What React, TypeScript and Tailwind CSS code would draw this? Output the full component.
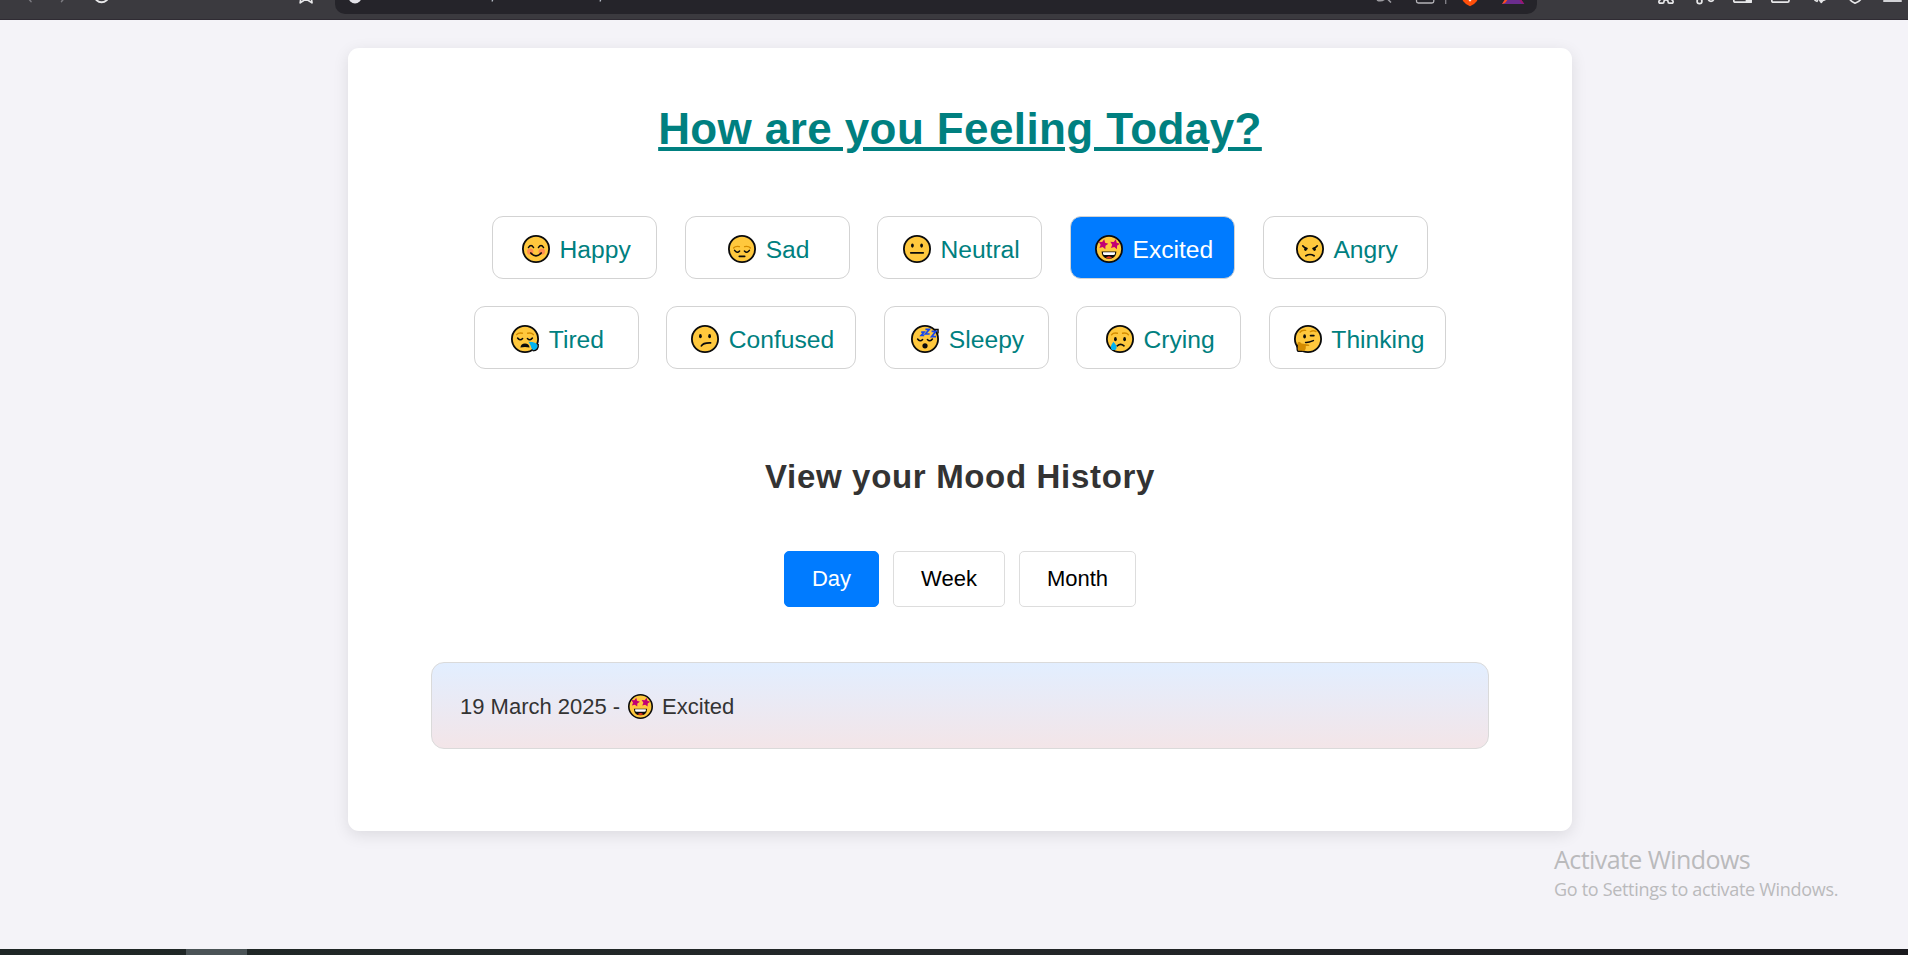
import { useState, type ReactNode } from "react";

const INK = "#0b0b0b";
const TAN = "#d48c00";

const starPoints = (cx: number, cy: number, r: number) =>
  Array.from({ length: 10 }, (_, i) => {
    const radius = i % 2 === 0 ? r : r * 0.5;
    const a = -Math.PI / 2 + 0.2 + (i * Math.PI) / 5;
    return `${(cx + radius * Math.cos(a)).toFixed(2)},${(cy + radius * Math.sin(a)).toFixed(2)}`;
  }).join(" ");

const Stroke = ({ d, color = INK, w = 1.6 }: { d: string; color?: string; w?: number }) => (
  <path d={d} fill="none" stroke={color} strokeWidth={w} strokeLinecap="round" />
);

const Eyes = ({ y, x1 = 9.4, x2 = 18.6 }: { y: number; x1?: number; x2?: number }) => (
  <>
    <ellipse cx={x1} cy={y} rx="1.4" ry="2.1" fill={INK} />
    <ellipse cx={x2} cy={y} rx="1.4" ry="2.1" fill={INK} />
  </>
);

const ClosedEyes = ({ y }: { y: number }) => (
  <Stroke d={`M6.6 ${y}Q9 ${y + 3.4} 11.6 ${y + 0.6}M16.4 ${y + 0.6}Q19 ${y + 3.4} 21.4 ${y}`} w={1.5} />
);

const Brows = ({ y }: { y: number }) => (
  <Stroke d={`M5.6 ${y + 1.4}Q7.6 ${y - 0.9} 11.4 ${y}M16.6 ${y}Q20.4 ${y - 0.9} 22.4 ${y + 1.4}`} color={TAN} w={1.4} />
);

const faces: Record<string, ReactNode> = {
  Happy: (
    <>
      <circle cx="8.2" cy="16.6" r="3.2" fill="#ff8d51" />
      <circle cx="19.8" cy="16.6" r="3.2" fill="#ff8d51" />
      <Stroke d="M6.4 12.6Q9 8.4 11.6 12.6M16.4 12.6Q19 8.4 21.6 12.6" w={1.4} />
      <Stroke d="M8.8 18Q14 23.6 19.2 18" w={1.7} />
    </>
  ),
  Sad: (
    <>
      <Brows y={11.6} />
      <ClosedEyes y={15.4} />
      <Stroke d="M11.3 21.3H16.7" w={1.7} />
    </>
  ),
  Neutral: (
    <>
      <Eyes y={10.6} />
      <Stroke d="M7.8 17.8H20.2" w={1.8} />
    </>
  ),
  Excited: (
    <>
      <polygon points={starPoints(8.2, 9.4, 5.2)} fill="#c30073" />
      <polygon points={starPoints(19.8, 9.4, 5.2)} fill="#c30073" />
      <path d="M6.6 16.4H21.4Q21 23.8 14 23.8T6.6 16.4Z" fill={INK} />
      <path d="M8 17.2H20V18.7Q19.8 19.9 18.4 19.9H9.6Q8.2 19.9 8 18.7Z" fill="#fff" />
      <path d="M10.8 22.8Q14 19.8 17.2 22.8Q14 24.4 10.8 22.8Z" fill="#e8341c" />
    </>
  ),
  Angry: (
    <>
      <Stroke d="M6.7 10.8Q8.2 13 11 13.6M21.3 10.8Q19.8 13 17 13.6" w={1.6} />
      <ellipse cx="9.5" cy="14.2" rx="1.3" ry="1.7" fill={INK} />
      <ellipse cx="18.5" cy="14.2" rx="1.3" ry="1.7" fill={INK} />
      <Stroke d="M9.9 20.8Q14 18.2 18.1 20.8" w={1.7} />
    </>
  ),
  Tired: (
    <>
      <Brows y={8.2} />
      <ClosedEyes y={13} />
      <path d="M9.4 22.6Q10 18.4 14 18.4T18.6 22.6Q14 21.4 9.4 22.6Z" fill={INK} />
      <path d="M17.4 16.8Q26.8 16.8 26.8 21.6A3.5 3.5 0 0 1 23.3 25.2C19.6 25.2 20.8 20.6 17.4 16.8Z" fill="#00b2f0" />
      <path d="M27.2 19Q28 25.6 21.8 25.9" stroke={INK} strokeWidth="1.4" fill="none" />
    </>
  ),
  Confused: (
    <>
      <Eyes y={11.2} />
      <Stroke d="M10.4 20.9Q12.2 17.6 19.6 17.9" w={1.7} />
    </>
  ),
  Sleepy: (
    <>
      <ClosedEyes y={14} />
      <circle cx="14" cy="20.8" r="2.6" fill={INK} />
      <path d="M23.4 4.4H27V8.6" stroke={INK} strokeWidth="1.5" fill="none" />
      <path
        d="M10.2 7.2H13L10.2 10.4H13.2M14.4 4.3H18.4L14.4 9H18.6M20.6 6.3H24.8L20.6 11.6H25"
        fill="none"
        stroke="#1646ee"
        strokeWidth="1.7"
      />
    </>
  ),
  Crying: (
    <>
      <Brows y={8.3} />
      <Eyes y={14.2} x1={9.4} x2={18.6} />
      <Stroke d="M11.2 20.8Q14.6 17.8 18 20.8" w={1.7} />
      <path d="M7.4 16.8Q10.8 20.6 10.6 22.2A2.9 2.9 0 0 1 4.8 22.2Q4.8 20.4 7.4 16.8Z" fill="#00b2f0" />
    </>
  ),
  Thinking: (
    <>
      <Stroke d="M6 7.2Q8 4.6 11.6 5.4M16.4 6.6Q19.6 5 22 6.6" color={TAN} w={1.4} />
      <ellipse cx="10.6" cy="11.4" rx="1.4" ry="2.1" fill={INK} />
      <Stroke d="M16.6 10.6H19.8" w={1.8} />
      <Stroke d="M11.6 17.4Q14 17.8 19.4 15.6" w={1.5} />
      <path
        d="M3.4 18.4Q4.4 15.8 6.4 17.4L7.6 18.6L14.6 19.4Q16 20 15 21H11.8V22Q12 26 8.4 26H4.6Q2.6 25 3.4 18.4Z"
        fill={TAN}
      />
      <path d="M3.2 19.6Q2.6 25.6 4.2 26.4H8.4" stroke={INK} strokeWidth="1.4" fill="none" />
    </>
  ),
};

function Emoji({ name, className }: { name: string; className: string }) {
  return (
    <svg viewBox="0 0 28 28" className={`shrink-0 overflow-visible ${className}`} aria-hidden="true">
      <circle cx="14" cy="14" r="13.1" fill="#ffc83d" stroke={INK} strokeWidth="1.8" />
      {faces[name]}
    </svg>
  );
}

function BrowserBar() {
  return (
    <header className="flex h-5 shrink-0 items-start border-b border-[#2f2b33] bg-[#3b3a3f]">
      <svg className="h-2 w-[335px] shrink-0" viewBox="0 0 335 8" fill="none" strokeLinecap="round" strokeLinejoin="round">
        <path d="M28 -2L31 1.6M64.5 -2L61.5 1.6" stroke="#7d7c82" strokeWidth="1.5" />
        <path d="M96.300 0Q101.500 4.600 107 0" stroke="#e8e8ea" strokeWidth="1.8" />
        <path d="M301 -3L300.200 2.900L306 -1L312 2.900L311.200 -3" stroke="#e8e8ea" strokeWidth="1.7" />
      </svg>
      <div className="h-[14px] w-[1202px] shrink-0 rounded-b-[10px] bg-[#25242a]">
        <svg className="h-2 w-[1202px]" viewBox="335 0 1202 8" fill="none">
          <circle cx="355" cy="-3" r="6.500" fill="#e3e3e9" />
          <path d="M493 -1L492 1.500M601 -1L600 1.500" stroke="#b7bcc6" strokeWidth="1.300" />
          <path d="M1377 0Q1381 2 1385 -1M1387.500 -1L1391 2.500" stroke="#9c9ba0" strokeWidth="1.500" />
          <path d="M1416.500 -4V1.200Q1416.500 3 1418.300 3H1432Q1433.800 3 1433.800 1.200V-4" stroke="#b4b3b8" strokeWidth="1.300" />
          <path d="M1445.700 0V4" stroke="#85848a" strokeWidth="1.300" />
          <path d="M1462 -2L1463 1Q1465 4 1470 6.200Q1475 4 1477 1L1478 -2Z" fill="#ff4f0a" />
          <path d="M1468.500 0H1471.500L1470 1.800Z" fill="#fff" />
          <path d="M1502 4L1506 -2H1520L1524.300 4Z" fill="#6b2d8e" />
          <path d="M1502 4L1506 -2H1509L1505 3Z" fill="#ff4f1a" />
          <path d="M1524.300 4L1520 -2H1518L1521.500 3Z" fill="#a5106b" />
        </svg>
      </div>
      <svg
        className="h-2 w-[371px] shrink-0"
        viewBox="1537 0 371 8"
        fill="none"
        stroke="#e8e8ea"
        strokeWidth="1.700"
        strokeLinecap="round"
        strokeLinejoin="round"
      >
        <path d="M1659 1Q1658.500 3.200 1660.500 3.200H1662.500Q1664 3.200 1664 1.500Q1664 0 1666 0T1668 1.500Q1668 3.200 1669.500 3.200H1671.500Q1673.500 3.200 1673 1L1671.500 -.5M1659 1L1660.500 -.5" />
        <circle cx="1699.500" cy="1.200" r="2.400" />
        <path d="M1708.300 -1Q1708.500 1.300 1711 1.300T1713.700 -1M1702 -.6L1704.500 -3" />
        <path d="M1733.800 -2V.7Q1733.800 2.200 1735.300 2.200H1751V-2" />
        <path d="M1746.500 -2H1751V2H1746.500Z" fill="#e8e8ea" />
        <path d="M1771.800 -2V.7Q1771.800 2.200 1773.300 2.200H1787.500Q1789 2.200 1789 .7V-2" />
        <path d="M1815 .4L1817 1.400L1818 -.5M1821.300 -2V2.500M1819.800 .6L1821.300 2.400L1822.800 .6L1825 -.3" strokeWidth="1.500" />
        <path d="M1849.600 -1Q1851 1.600 1855 3.200Q1859.500 1.600 1861 -1" />
        <path d="M1884 1.100H1901" stroke="#d2d2d6" strokeWidth="2" />
      </svg>
    </header>
  );
}

const moodRows = [
  ["Happy", "Sad", "Neutral", "Excited", "Angry"],
  ["Tired", "Confused", "Sleepy", "Crying", "Thinking"],
];
const ranges = ["Day", "Week", "Month"];

export default function App() {
  const [mood, setMood] = useState("Excited");
  const [range, setRange] = useState("Day");

  return (
    <div className="relative flex h-[955px] w-[1908px] flex-col overflow-hidden bg-[#f4f3f8] font-['Liberation_Sans',Arial,sans-serif]">
      <BrowserBar />

      <main className="flex flex-1 justify-center pt-7 pl-3">
        <section className="flex h-[783px] w-[1224px] flex-col items-center rounded-[11px] bg-white px-[83px] pt-[54px] shadow-[0_4px_16px_rgba(0,0,0,0.1)]">
          <h1 className="h-[53px] text-[44px] leading-[53px] font-bold tracking-[0.4px] whitespace-nowrap text-[#008080] underline decoration-4 underline-offset-[3px]">
            How are you Feeling Today?
          </h1>

          <div className="mt-[61px] flex flex-col gap-[27px]">
            {moodRows.map((row) => (
              <div key={row[0]} className="flex justify-center gap-[27.5px]">
                {row.map((name) => (
                  <button
                    key={name}
                    onClick={() => setMood(name)}
                    className={`flex h-[63px] min-w-[165px] items-center justify-center rounded-[11px] border border-[#d3d3d3] px-[21px] pt-[3px] text-[24.64px] ${
                      name === mood ? "bg-[#007bff] text-white" : "bg-white text-[#008080]"
                    }`}
                  >
                    <Emoji name={name} className="mr-[9.8px] ml-[2.9px] size-7" />
                    <span className="pt-0.5">{name}</span>
                  </button>
                ))}
              </div>
            ))}
          </div>

          <h2 className="mt-[88px] h-10 text-[33px] leading-10 font-bold tracking-[0.67px] whitespace-nowrap text-[#333]">
            View your Mood History
          </h2>

          <div className="mt-[54px] flex gap-[14px]">
            {ranges.map((name) => (
              <button
                key={name}
                onClick={() => setRange(name)}
                className={`h-14 rounded-[5px] border px-[27px] pb-0.5 text-[22px] ${
                  name === range ? "border-[#007bff] bg-[#007bff] text-white" : "border-[#ddd] bg-white text-black"
                }`}
              >
                {name}
              </button>
            ))}
          </div>

          <div className="mt-[55px] flex h-[87px] w-full items-center rounded-[13px] border border-[#dadada] bg-linear-to-b from-[#e2eeff] to-[#f3e5e8] px-7 pt-px text-[22px] text-[#333]">
            <span>19 March 2025 -</span>
            <Emoji name="Excited" className="mr-[8.7px] ml-[8.2px] size-[25px]" />
            <span>{mood}</span>
          </div>
        </section>
      </main>

      <div className="absolute top-[842px] left-[1554px] font-['Open_Sans',sans-serif] whitespace-nowrap text-[#bababc]">
        <p className="text-[25px] leading-[34px] tracking-[-0.57px]">Activate Windows</p>
        <p className="text-[18px] leading-[26px] tracking-[-0.31px]">Go to Settings to activate Windows.</p>
      </div>

      <footer className="flex h-1.5 shrink-0 bg-linear-to-r from-[#1e2625] via-[#232729] to-[#19191d] pl-[186px]">
        <div className="h-full w-[61px] bg-[#4a5356]" />
      </footer>
    </div>
  );
}
